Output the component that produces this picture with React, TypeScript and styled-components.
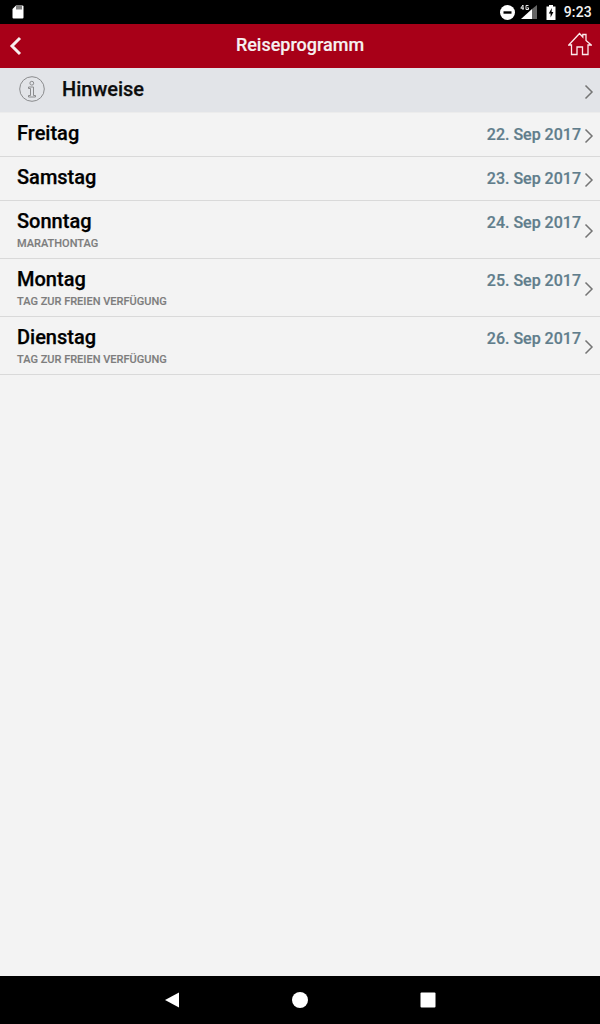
import React from "react";
import styled, { createGlobalStyle } from "styled-components";

const Global = createGlobalStyle`
  html, body { margin: 0; padding: 0; background: #f3f3f3; }
  body { font-family: Roboto, "Liberation Sans", sans-serif; }
`;

const Page = styled.div`
  width: 600px;
  height: 1024px;
  display: flex;
  flex-direction: column;
  background: #f3f3f3;
  overflow: hidden;
`;

const StatusBar = styled.div`
  height: 24px;
  flex: none;
  background: #000;
  display: flex;
  align-items: center;
  padding: 0 8px 0 12px;
  color: #fff;
`;

const StatusRight = styled.div`
  margin-left: auto;
  display: flex;
  align-items: center;
`;

const Clock = styled.span`
  font-size: 14px;
  font-weight: 500;
  letter-spacing: 0.2px;
  margin-left: 8px;
  color: #f2f2f2;
`;

const Header = styled.header`
  height: 44px;
  flex: none;
  box-sizing: border-box;
  padding-bottom: 4px;
  background: #a80018;
  display: grid;
  grid-template-columns: 60px 1fr 60px;
  align-items: center;
  color: #fff;
`;

const Title = styled.h1`
  margin: 0;
  text-align: center;
  font-size: 18px;
  font-weight: 500;
  color: #f6f1f1;
  -webkit-text-stroke: 0.15px #f6f1f1;
`;

const HeaderLeft = styled.div`
  display: flex;
  padding-left: 9px;
  padding-top: 3px;
`;

const HeaderRight = styled.div`
  display: flex;
  justify-content: flex-end;
  padding-right: 8px;
`;

const InfoRow = styled.div`
  height: 44px;
  flex: none;
  background: #e2e4e8;
  display: flex;
  align-items: center;
  padding: 0 6px 0 19px;
  border-bottom: 1px solid #ececec;
  box-sizing: content-box;
`;

const InfoLabel = styled.span`
  margin-left: 17px;
  font-size: 20px;
  font-weight: 500;
  color: #0c0c0c;
  -webkit-text-stroke: 0.25px #0c0c0c;
  position: relative;
  top: -1px;
`;

const Row = styled.div<{ $tall?: boolean }>`
  flex: none;
  display: flex;
  justify-content: space-between;
  padding: 8px 6px 0 17px;
  box-sizing: content-box;
  height: ${(p) => (p.$tall ? 49 : 35)}px;
  border-bottom: 1px solid #d9d9d9;
`;

const Day = styled.div`
  font-size: 20px;
  line-height: 24px;
  font-weight: 500;
  color: #000;
  -webkit-text-stroke: 0.25px #000;
`;

const Note = styled.div`
  font-size: 11px;
  line-height: 13px;
  margin-top: 4px;
  font-weight: 500;
  color: #7d7d7d;
  -webkit-text-stroke: 0.15px #7d7d7d;
`;

const DateBox = styled.div`
  display: flex;
  align-items: flex-start;
`;

const DateText = styled.span`
  font-size: 16px;
  line-height: 24px;
  font-weight: 500;
  color: #607d8b;
  -webkit-text-stroke: 0.2px #607d8b;
  margin-top: 2px;
`;

const Chevron = styled.svg<{ $drop: number }>`
  width: 10px;
  height: 16px;
  margin-left: 3px;
  margin-top: ${(p) => p.$drop}px;
  fill: none;
  stroke: #757575;
  stroke-width: 1.5;
`;

const Spacer = styled.div`
  flex: 1;
`;

const NavBar = styled.nav`
  height: 48px;
  flex: none;
  background: #000;
  display: grid;
  grid-template-columns: repeat(3, 128px);
  justify-content: center;
  justify-items: center;
  align-items: center;
`;

const Arrow = ({ drop }: { drop: number }) => (
  <Chevron $drop={drop} viewBox="0 0 10 16">
    <path d="M1.5 1.5 L8 8 L1.5 14.5" />
  </Chevron>
);

const rows = [
  { day: "Freitag", date: "22. Sep 2017" },
  { day: "Samstag", date: "23. Sep 2017" },
  { day: "Sonntag", date: "24. Sep 2017", note: "MARATHONTAG" },
  { day: "Montag", date: "25. Sep 2017", note: "TAG ZUR FREIEN VERFÜGUNG" },
  { day: "Dienstag", date: "26. Sep 2017", note: "TAG ZUR FREIEN VERFÜGUNG" },
];

export default function App() {
  return (
    <Page>
      <Global />
      <StatusBar>
        <svg width="12" height="14" viewBox="0 0 12 14">
          <path fill="#fff" d="M4 0.5 H10.5 A1 1 0 0 1 11.5 1.5 V12.5 A1 1 0 0 1 10.5 13.5 H1.5 A1 1 0 0 1 0.5 12.5 V4 Z" />
          <path stroke="#000" strokeWidth="1" d="M5 1 V4.5 M7 1 V4.5 M9 1 V4.5" />
        </svg>
        <StatusRight>
          <svg width="15" height="15" viewBox="0 0 15 15">
            <circle cx="7.5" cy="7.5" r="7.5" fill="#fff" />
            <rect x="3.5" y="6.3" width="8" height="2.4" fill="#000" />
          </svg>
          <svg width="18" height="16" viewBox="0 0 18 16" style={{ marginLeft: 5 }}>
            <path fill="#fff" d="M1 15 L12 5 V15 Z" />
            <path fill="#666" d="M12 5 L17 1 V15 H12 Z" />
            <path stroke="#fff" strokeWidth="0.9" fill="none" d="M3 1 L0.8 4.2 H4 M3 1 V6 M8.5 1.5 H6 V5.5 H8.5 V3.8 H7.2" />
          </svg>
          <svg width="10" height="15" viewBox="0 0 10 15" style={{ marginLeft: 8 }}>
            <path fill="#fff" d="M3 0 H7 V1.5 H9.5 V15 H0.5 V1.5 H3 Z" />
            <path fill="#000" d="M5.8 3 L2.8 8.6 H4.6 V12.5 L7.4 7 H5.6 Z" />
          </svg>
          <Clock>9:23</Clock>
        </StatusRight>
      </StatusBar>
      <Header>
        <HeaderLeft>
          <svg width="14" height="20" viewBox="0 0 14 20" fill="none" stroke="#f8eeee" strokeWidth="3">
            <path d="M11 2 L3 10 L11 18" />
          </svg>
        </HeaderLeft>
        <Title>Reiseprogramm</Title>
        <HeaderRight>
          <svg width="24" height="24" viewBox="0 0 24 24" fill="none" stroke="#fbeaec" strokeWidth="1.3">
            <path d="M0.8 13 L11.5 1.5 L14.8 5 V2.5 H18 V8.5 L23.2 13 L20 13 V22.5 H14.5 V15 H9 V22.5 H3.5 V13 Z" />
          </svg>
        </HeaderRight>
      </Header>
      <InfoRow>
        <svg width="26" height="26" viewBox="0 0 26 26" fill="none" stroke="#8a8b8d" strokeWidth="1" style={{ marginTop: -2 }}>
          <circle cx="13" cy="13" r="12.3" />
          <circle cx="12.8" cy="7.2" r="1.9" />
          <path d="M9.5 11 H14.5 V19.5 H16.5 V21 H9.5 V19.5 H11.5 V12.5 H9.5 Z" />
        </svg>
        <InfoLabel>Hinweise</InfoLabel>
        <Spacer />
        <Arrow drop={4} />
      </InfoRow>
      {rows.map((r) => (
        <Row key={r.day} $tall={!!r.note}>
          <div>
            <Day>{r.day}</Day>
            {r.note && <Note>{r.note}</Note>}
          </div>
          <DateBox>
            <DateText>{r.date}</DateText>
            <Arrow drop={r.note ? 14 : 7} />
          </DateBox>
        </Row>
      ))}
      <Spacer />
      <NavBar>
        <svg width="16" height="16" viewBox="0 0 16 16">
          <path fill="#fff" d="M1 8 L15 0.5 V15.5 Z" />
        </svg>
        <svg width="16" height="16" viewBox="0 0 16 16">
          <circle cx="8" cy="8" r="8" fill="#fff" />
        </svg>
        <svg width="16" height="16" viewBox="0 0 16 16">
          <rect x="0.5" y="0.5" width="15" height="15" rx="1" fill="#fff" />
        </svg>
      </NavBar>
    </Page>
  );
}
